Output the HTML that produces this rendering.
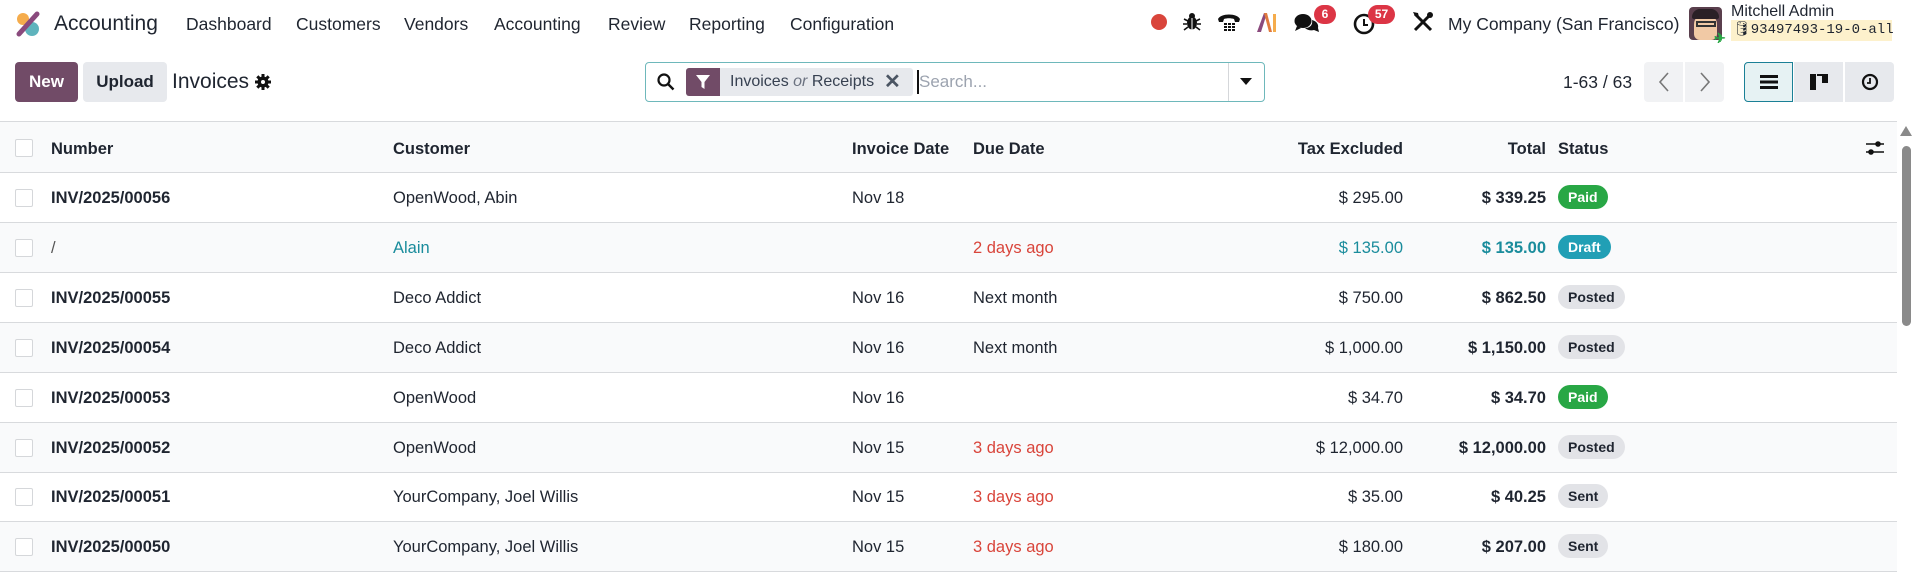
<!DOCTYPE html>
<html><head><meta charset="utf-8"><style>
*{box-sizing:border-box;margin:0;padding:0}
body{width:1915px;height:565px;overflow:hidden;background:#fff;font-family:"Liberation Sans",sans-serif;color:#1f2530;font-size:16.5px;position:relative}
.a{position:absolute;white-space:nowrap}
.nav{font-size:17.5px;top:14px}
.row{position:absolute;left:0;width:1897px;height:50px;border-bottom:1px solid #d8dadd}
.row .a{top:16px}
.cb{position:absolute;left:15px;top:16px;width:18px;height:18px;border:1px solid #d5d7da;border-radius:2px;background:#fff}
.b{font-weight:bold}
.r{text-align:right}
.badge{position:absolute;left:1558px;top:12px;height:24px;padding:0 10px;border-radius:12px;font-size:14px;font-weight:bold;line-height:24px}
.paid{background:#28a745;color:#fff}
.draft{background:#219fb5;color:#fff}
.posted{background:#e2e3e7;color:#1f2530}
.red{color:#d9453b}
.teal{color:#1a8c9c}
.bdg{position:absolute;background:#dc3545;color:#fff;font-size:12px;font-weight:bold;border-radius:10px;height:19px;line-height:19px;text-align:center}
</style></head><body>
<svg class="a" style="left:14px;top:10px" width="28" height="28" viewBox="0 0 28 28"><circle cx="9" cy="9" r="6" fill="#f5ac4c"/><circle cx="18" cy="19" r="7" fill="#5fb4bd"/><line x1="23" y1="4" x2="5" y2="24" stroke="#8a4a7d" stroke-width="5" stroke-linecap="round"/></svg>
<div class="a" style="left:54px;top:12px;font-size:21px">Accounting</div>
<div class="a nav" style="left:186px">Dashboard</div>
<div class="a nav" style="left:296px">Customers</div>
<div class="a nav" style="left:404px">Vendors</div>
<div class="a nav" style="left:494px">Accounting</div>
<div class="a nav" style="left:608px">Review</div>
<div class="a nav" style="left:689px">Reporting</div>
<div class="a nav" style="left:790px">Configuration</div>

<div class="a" style="left:1151px;top:14px;width:16px;height:16px;border-radius:50%;background:#d9453b"></div>
<svg class="a" style="left:1183px;top:12px" width="18" height="20" viewBox="0 0 18 20"><ellipse cx="9" cy="11" rx="5" ry="6.5" fill="#111"/><circle cx="9" cy="4" r="3" fill="#111"/><path d="M1 7l4 2M17 7l-4 2M0 12h4M18 12h-4M1 18l4-3M17 18l-4-3" stroke="#111" stroke-width="1.6"/><line x1="9" y1="6" x2="9" y2="18" stroke="#fff" stroke-width="1"/></svg>
<svg class="a" style="left:1217px;top:12px" width="24" height="20" viewBox="0 0 24 20"><path d="M1 7C4 1 20 1 23 7l-1 3h-4l-1-3c-3-1-7-1-10 0l-1 3H2z" fill="#111"/><g fill="#111"><rect x="7" y="11" width="3" height="2"/><rect x="11" y="11" width="3" height="2"/><rect x="15" y="11" width="3" height="2"/><rect x="7" y="14" width="3" height="2"/><rect x="11" y="14" width="3" height="2"/><rect x="15" y="14" width="3" height="2"/><rect x="7" y="17" width="3" height="2"/><rect x="11" y="17" width="3" height="2"/><rect x="15" y="17" width="3" height="2"/></g></svg>
<svg class="a" style="left:1256px;top:11px" width="22" height="22" viewBox="0 0 22 22"><path d="M1 21L8 2h3l-6 19z" fill="#8a4a7d"/><path d="M8 2h3l5 19h-3z" fill="#e07a3e"/><rect x="17" y="3" width="3" height="18" fill="#f5ac4c"/></svg>
<svg class="a" style="left:1294px;top:12px" width="26" height="22" viewBox="0 0 26 22"><ellipse cx="9" cy="9" rx="8.5" ry="7" fill="#111"/><path d="M3 14l-2 5 6-3z" fill="#111"/><path d="M18 8c4 1 7 4 6 8l1 4-5-2c-3 1-7 0-9-2 5 0 8-3 7-8z" fill="#111"/></svg>
<div class="bdg" style="left:1314px;top:5px;width:22px">6</div>
<svg class="a" style="left:1353px;top:13px" width="22" height="22" viewBox="0 0 22 22"><circle cx="11" cy="11" r="9" fill="none" stroke="#111" stroke-width="2.6"/><path d="M11 6v6h4" fill="none" stroke="#111" stroke-width="2"/></svg>
<div class="bdg" style="left:1368px;top:5px;width:27px">57</div>
<svg class="a" style="left:1412px;top:11px" width="22" height="22" viewBox="0 0 22 22"><path d="M3 3l16 16" stroke="#111" stroke-width="3"/><path d="M19 3L3 19" stroke="#111" stroke-width="3"/><circle cx="18" cy="4" r="3" fill="#111"/><path d="M1 1l5 1 1 4-4-1z" fill="#111"/></svg>
<div class="a nav" style="left:1448px">My Company (San Francisco)</div>
<div class="a" style="left:1689px;top:7px;width:33px;height:33px;border-radius:4px;background:#5a3f4d;overflow:hidden"><div style="position:absolute;left:5px;top:8px;width:23px;height:25px;border-radius:9px 9px 6px 6px;background:#f1c9a5"></div><div style="position:absolute;left:3px;top:2px;width:27px;height:10px;border-radius:8px 8px 2px 2px;background:#2a2026"></div><div style="position:absolute;left:7px;top:14px;width:20px;height:6px;border:2px solid #333"></div></div>
<div class="a" style="left:1714px;top:30px;color:#28a745;font-size:14px;font-weight:bold">✈</div>
<div class="a" style="left:1731px;top:3px;font-size:16px">Mitchell Admin</div>
<div class="a" style="left:1731px;top:20px;height:21px;width:161px;background:#fdf1cc;font-family:'Liberation Mono',monospace;font-size:14px;line-height:21px;padding-left:2px">🛢93497493-19-0-all</div>

<div class="a" style="left:15px;top:62px;width:63px;height:40px;background:#714b67;border-radius:4px;color:#fff;font-weight:bold;font-size:17px;line-height:40px;text-align:center">New</div>
<div class="a" style="left:83px;top:62px;width:84px;height:40px;background:#e7e9ed;border-radius:4px;font-weight:bold;font-size:17px;line-height:40px;text-align:center">Upload</div>
<div class="a" style="left:172px;top:70px;font-size:21px">Invoices</div>
<svg class="a" style="left:255px;top:74px" width="16" height="16" viewBox="0 0 16 16"><circle cx="8" cy="8" r="5.5" fill="#111"/><g stroke="#111" stroke-width="3"><path d="M8 0v16M0 8h16M2.3 2.3l11.4 11.4M13.7 2.3L2.3 13.7"/></g><circle cx="8" cy="8" r="2" fill="#fff"/></svg>

<div class="a" style="left:645px;top:62px;width:620px;height:40px;border:1px solid #6eb8bb;border-radius:4px"></div>
<svg class="a" style="left:657px;top:73px" width="18" height="18" viewBox="0 0 18 18"><circle cx="7" cy="7" r="5.5" fill="none" stroke="#111" stroke-width="2.2"/><path d="M11 11l5.5 5.5" stroke="#111" stroke-width="2.4"/></svg>
<div class="a" style="left:686px;top:68px;width:227px;height:28px;background:#e7e9ed;border-radius:3px"></div>
<div class="a" style="left:686px;top:68px;width:34px;height:28px;background:#714b67;border-radius:3px 0 0 3px"></div>
<svg class="a" style="left:696px;top:75px" width="14" height="14" viewBox="0 0 14 14"><path d="M0 0h14L8.5 7v7L5.5 12V7z" fill="#fff"/></svg>
<div class="a" style="left:730px;top:73px;font-size:16px;color:#374151">Invoices <i style="color:#6b7280">or</i> Receipts</div>
<div class="a" style="left:884px;top:69px;font-size:20px;color:#4b5563;font-weight:bold">✕</div>
<div class="a" style="left:917px;top:70px;width:2px;height:24px;background:#111"></div>
<div class="a" style="left:919px;top:72px;font-size:17px;color:#9ca3af">Search...</div>
<div class="a" style="left:1228px;top:63px;width:1px;height:38px;background:#d5d7da"></div>
<svg class="a" style="left:1240px;top:78px" width="12" height="8" viewBox="0 0 12 8"><path d="M0 0h12L6 7z" fill="#111"/></svg>

<div class="a" style="left:1563px;top:72px;font-size:17.5px">1-63 / 63</div>
<div class="a" style="left:1644px;top:62px;width:39px;height:40px;background:#f1f2f4;border-radius:4px 0 0 4px"></div>
<div class="a" style="left:1685px;top:62px;width:39px;height:40px;background:#f1f2f4;border-radius:0 4px 4px 0"></div>
<svg class="a" style="left:1658px;top:71px" width="12" height="22" viewBox="0 0 12 22"><path d="M10 2L2 11l8 9" fill="none" stroke="#777" stroke-width="1.6"/></svg>
<svg class="a" style="left:1699px;top:71px" width="12" height="22" viewBox="0 0 12 22"><path d="M2 2l8 9-8 9" fill="none" stroke="#777" stroke-width="1.6"/></svg>
<div class="a" style="left:1744px;top:62px;width:49px;height:40px;background:#e6f2f3;border:1px solid #1a8096;border-radius:4px 0 0 4px"></div>
<div class="a" style="left:1794px;top:62px;width:49px;height:40px;background:#e7e9ed"></div>
<div class="a" style="left:1845px;top:62px;width:49px;height:40px;background:#e7e9ed;border-radius:0 4px 4px 0"></div>
<svg class="a" style="left:1760px;top:74px" width="18" height="16" viewBox="0 0 18 16"><rect y="1" width="18" height="3" fill="#111"/><rect y="6.5" width="18" height="3" fill="#111"/><rect y="12" width="18" height="3" fill="#111"/></svg>
<svg class="a" style="left:1810px;top:74px" width="18" height="16" viewBox="0 0 18 16"><rect width="6" height="16" fill="#111"/><rect x="7" width="11" height="2" fill="#111"/><rect x="12" y="2" width="6" height="7" fill="#111"/></svg>
<svg class="a" style="left:1861px;top:73px" width="18" height="18" viewBox="0 0 18 18"><circle cx="9" cy="9" r="7" fill="none" stroke="#111" stroke-width="2.2"/><path d="M9 5v5H6" fill="none" stroke="#111" stroke-width="1.8"/></svg>

<div class="a" style="left:0;top:121px;width:1897px;height:52px;background:#f9fafb;border-top:1px solid #d8dadd;border-bottom:1px solid #d8dadd"></div>
<div class="cb" style="top:139px"></div>
<div class="a b" style="left:51px;top:140px">Number</div>
<div class="a b" style="left:393px;top:140px">Customer</div>
<div class="a b" style="left:852px;top:140px">Invoice Date</div>
<div class="a b" style="left:973px;top:140px">Due Date</div>
<div class="a b r" style="left:1250px;width:153px;top:140px">Tax Excluded</div>
<div class="a b r" style="left:1450px;width:96px;top:140px">Total</div>
<div class="a b" style="left:1558px;top:140px">Status</div>
<svg class="a" style="left:1866px;top:139px" width="18" height="18" viewBox="0 0 18 18"><path d="M0 5h18M0 13h18" stroke="#111" stroke-width="1.6"/><circle cx="12" cy="5" r="2.8" fill="#111"/><circle cx="5" cy="13" r="2.8" fill="#111"/></svg>
<div class="a" style="left:1897px;top:121px;width:18px;height:444px;background:#fff"></div>
<svg class="a" style="left:1900px;top:126px" width="12" height="10" viewBox="0 0 12 10"><path d="M0 10h12L6 0z" fill="#8a8a8a"/></svg>
<div class="a" style="left:1902px;top:146px;width:9px;height:180px;border-radius:5px;background:#8a8a8a"></div>

<div class="row" style="top:173px"><div class="cb"></div><div class="a b" style="left:51px">INV/2025/00056</div><div class="a" style="left:393px">OpenWood, Abin</div><div class="a" style="left:852px">Nov 18</div><div class="a r" style="left:1250px;width:153px">$ 295.00</div><div class="a b r" style="left:1450px;width:96px">$ 339.25</div><div class="badge paid">Paid</div></div>
<div class="row" style="top:223px;background:#f9fafb"><div class="cb"></div><div class="a" style="left:51px;color:#555">/</div><div class="a teal" style="left:393px">Alain</div><div class="a red" style="left:973px">2 days ago</div><div class="a r teal" style="left:1250px;width:153px">$ 135.00</div><div class="a b r teal" style="left:1450px;width:96px">$ 135.00</div><div class="badge draft">Draft</div></div>
<div class="row" style="top:273px"><div class="cb"></div><div class="a b" style="left:51px">INV/2025/00055</div><div class="a" style="left:393px">Deco Addict</div><div class="a" style="left:852px">Nov 16</div><div class="a" style="left:973px">Next month</div><div class="a r" style="left:1250px;width:153px">$ 750.00</div><div class="a b r" style="left:1450px;width:96px">$ 862.50</div><div class="badge posted">Posted</div></div>
<div class="row" style="top:323px;background:#f9fafb"><div class="cb"></div><div class="a b" style="left:51px">INV/2025/00054</div><div class="a" style="left:393px">Deco Addict</div><div class="a" style="left:852px">Nov 16</div><div class="a" style="left:973px">Next month</div><div class="a r" style="left:1250px;width:153px">$ 1,000.00</div><div class="a b r" style="left:1450px;width:96px">$ 1,150.00</div><div class="badge posted">Posted</div></div>
<div class="row" style="top:373px"><div class="cb"></div><div class="a b" style="left:51px">INV/2025/00053</div><div class="a" style="left:393px">OpenWood</div><div class="a" style="left:852px">Nov 16</div><div class="a r" style="left:1250px;width:153px">$ 34.70</div><div class="a b r" style="left:1450px;width:96px">$ 34.70</div><div class="badge paid">Paid</div></div>
<div class="row" style="top:423px;background:#f9fafb"><div class="cb"></div><div class="a b" style="left:51px">INV/2025/00052</div><div class="a" style="left:393px">OpenWood</div><div class="a" style="left:852px">Nov 15</div><div class="a red" style="left:973px">3 days ago</div><div class="a r" style="left:1250px;width:153px">$ 12,000.00</div><div class="a b r" style="left:1450px;width:96px">$ 12,000.00</div><div class="badge posted">Posted</div></div>
<div class="row" style="top:472px"><div class="cb"></div><div class="a b" style="left:51px">INV/2025/00051</div><div class="a" style="left:393px">YourCompany, Joel Willis</div><div class="a" style="left:852px">Nov 15</div><div class="a red" style="left:973px">3 days ago</div><div class="a r" style="left:1250px;width:153px">$ 35.00</div><div class="a b r" style="left:1450px;width:96px">$ 40.25</div><div class="badge posted">Sent</div></div>
<div class="row" style="top:522px;background:#f9fafb"><div class="cb"></div><div class="a b" style="left:51px">INV/2025/00050</div><div class="a" style="left:393px">YourCompany, Joel Willis</div><div class="a" style="left:852px">Nov 15</div><div class="a red" style="left:973px">3 days ago</div><div class="a r" style="left:1250px;width:153px">$ 180.00</div><div class="a b r" style="left:1450px;width:96px">$ 207.00</div><div class="badge posted">Sent</div></div>
</body></html>
